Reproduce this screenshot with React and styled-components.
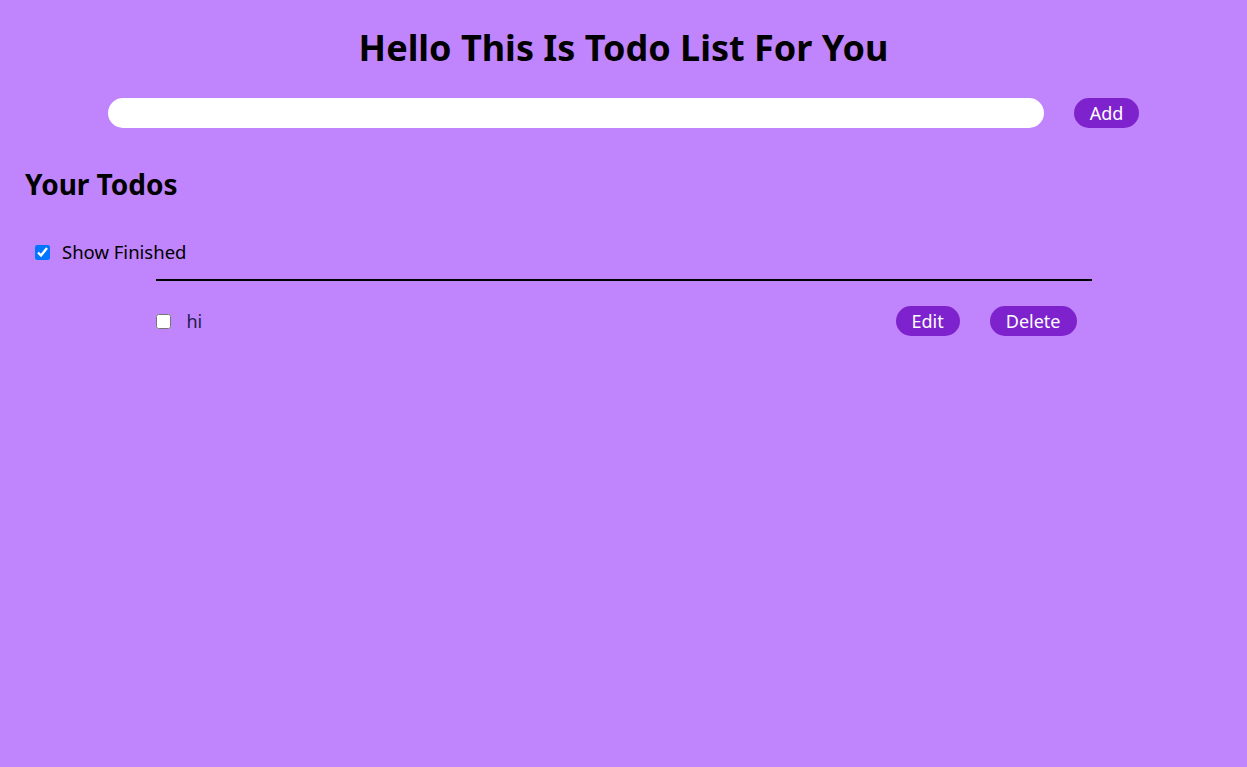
import React, { useState } from 'react';
import styled, { createGlobalStyle } from 'styled-components';

const GlobalStyle = createGlobalStyle`
  html, body {
    margin: 0;
    padding: 0;
    background: #c084fc;
  }
  body {
    font-family: "Noto Sans", "Open Sans", sans-serif;
  }
  * { box-sizing: border-box; }
`;

export default function App() {
  const [todo, setTodo] = useState('');
  const [showFinished, setShowFinished] = useState(true);
  const [todos] = useState([{ id: 1, text: 'hi', done: false }]);

  return (
    <>
      <GlobalStyle />
      <Page>
        <Title>Hello This Is Todo List For You</Title>
        <AddRow>
          <TodoInput value={todo} onChange={(e) => setTodo(e.target.value)} />
          <PillButton>Add</PillButton>
        </AddRow>
        <SectionTitle>Your Todos</SectionTitle>
        <FilterRow>
          <Check
            type="checkbox"
            checked={showFinished}
            onChange={() => setShowFinished(!showFinished)}
          />
          Show Finished
        </FilterRow>
        <Divider />
        <TodoList>
          {todos.map((item) => (
            <TodoRow key={item.id}>
              <TodoLeft>
                <Check type="checkbox" defaultChecked={item.done} />
                <TodoText>{item.text}</TodoText>
              </TodoLeft>
              <Actions>
                <PillButton>Edit</PillButton>
                <PillButton>Delete</PillButton>
              </Actions>
            </TodoRow>
          ))}
        </TodoList>
      </Page>
    </>
  );
}

const Page = styled.div`
  min-height: 767px;
  background: #c084fc;
  padding: 24px 0 0;
  color: #000;
`;

const Title = styled.h1`
  margin: 0;
  text-align: center;
  font-size: 36px;
  font-weight: 700;
  line-height: 48px;
`;

const AddRow = styled.div`
  display: flex;
  justify-content: center;
  align-items: center;
  gap: 30px;
  margin-top: 26px;
`;

const TodoInput = styled.input`
  width: 936px;
  height: 30px;
  border: none;
  outline: none;
  border-radius: 999px;
  background: #fff;
  padding: 0 12px;
  font-family: inherit;
  font-size: 16px;
`;

const PillButton = styled.button`
  height: 30px;
  padding: 0 16px;
  border: none;
  border-radius: 999px;
  background: #7e22ce;
  color: #fff;
  font-family: inherit;
  font-size: 18px;
  line-height: 30px;
  cursor: pointer;
`;

const SectionTitle = styled.h2`
  margin: 38px 0 0 25px;
  font-size: 28px;
  font-weight: 700;
  line-height: 36px;
`;

const FilterRow = styled.label`
  display: flex;
  align-items: center;
  gap: 12px;
  margin: 36px 0 0 35px;
  font-size: 18.5px;
  line-height: 28px;
`;

const Check = styled.input`
  width: 15px;
  height: 15px;
  margin: 0;
`;

const Divider = styled.hr`
  width: 936px;
  margin: 13px auto 0;
  border: none;
  border-top: 2px solid #000;
`;

const TodoList = styled.div`
  width: 936px;
  margin: 0 auto;
`;

const TodoRow = styled.div`
  display: flex;
  align-items: center;
  justify-content: space-between;
  padding: 25px 15px 0 0;
`;

const TodoLeft = styled.label`
  display: flex;
  align-items: center;
  gap: 16px;
`;

const TodoText = styled.span`
  font-size: 18px;
  line-height: 28px;
  color: #1e1b4b;
`;

const Actions = styled.div`
  display: flex;
  gap: 30px;
`;
